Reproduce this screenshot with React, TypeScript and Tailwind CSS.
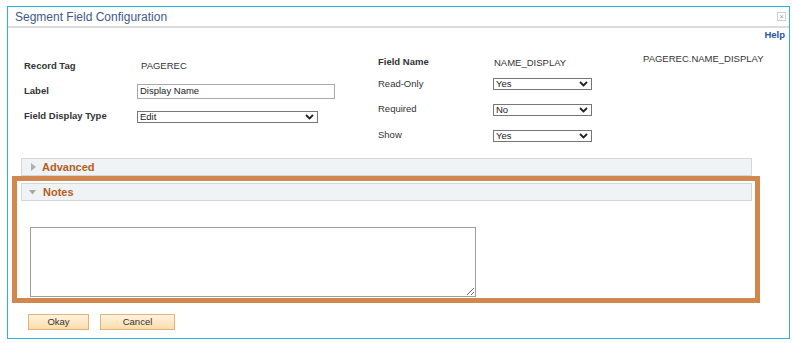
import type { ReactNode } from "react";

const FONT = "font-['Liberation_Sans',Arial,sans-serif]";

function Chevron() {
  return (
    <svg width="9" height="6" viewBox="0 0 9 6" className="shrink-0">
      <path d="M1 1 L4.5 4.5 L8 1" fill="none" stroke="#222" strokeWidth="1.8" />
    </svg>
  );
}

function FakeSelect({ value, width }: { value: string; width: string }) {
  return (
    <div
      className={`flex h-[12px] items-center justify-between border border-[#767676] bg-white pl-[2px] pr-[3px] text-[9.5px] leading-none text-[#222] ${width}`}
    >
      <span>{value}</span>
      <Chevron />
    </div>
  );
}

function Row({ h, label, bold, children }: { h: string; label: string; bold?: boolean; children: ReactNode }) {
  return (
    <div className={`flex items-center ${h}`}>
      <div className={`text-[9.5px] text-[#333] ${bold ? "font-bold" : ""}`}>{label}</div>
      {children}
    </div>
  );
}

function SectionBar({ title, open }: { title: string; open?: boolean }) {
  return (
    <div className="ml-[13px] flex h-[18px] w-[731px] items-center border border-[#d3d7da] bg-[#eff3f5]">
      {open ? (
        <svg width="7" height="5" viewBox="0 0 7 5" className="ml-[7px] mr-[7px]">
          <path d="M0 0 L7 0 L3.5 4.5 Z" fill="#a8a8a8" />
        </svg>
      ) : (
        <svg width="5" height="8" viewBox="0 0 5 8" className="ml-[9px] mr-[6px]">
          <path d="M0 0 L5 4 L0 8 Z" fill="#b0b0b0" />
        </svg>
      )}
      <span className="text-[11px] font-bold leading-none text-[#b45d1c]">{title}</span>
    </div>
  );
}

function PsButton({ label, width }: { label: string; width: string }) {
  return (
    <button
      type="button"
      className={`h-[16px] ${width} border border-[#e2b27c] bg-gradient-to-b from-[#fef3df] to-[#fbdcaa] text-[9.5px] leading-none text-[#333]`}
    >
      {label}
    </button>
  );
}

export default function App() {
  return (
    <div className={`h-[343px] w-[792px] bg-white pl-[7px] pt-[6px] ${FONT}`}>
      <div className="flex h-[333px] w-[783px] flex-col border border-[#27b4e8] bg-white">
        {/* title bar */}
        <div className="flex h-[21px] shrink-0 items-center justify-between border-b-2 border-[#dcdcdc] pl-[7px] pr-[3px]">
          <span className="text-[12px] text-[#40598a]">Segment Field Configuration</span>
          <div className="flex h-[9px] w-[9px] items-center justify-center border border-[#cfcfcf] text-[8px] leading-none text-[#9a9a9a]">
            ×
          </div>
        </div>

        {/* help */}
        <div className="flex h-[14px] items-center justify-end pr-[4px]">
          <span className="text-[9.5px] font-bold text-[#2a5599]">Help</span>
        </div>

        {/* form */}
        <div className="mt-[9px] flex pl-[16px]">
          <div className="w-[354px] pt-[3px]">
            <Row h="h-[25px]" label="Record Tag" bold>
              <div className="ml-auto w-[241px] pl-[4px] text-[9.5px] text-[#333]">PAGEREC</div>
            </Row>
            <Row h="h-[25px]" label="Label" bold>
              <div className="ml-auto mr-[43px] flex h-[15px] w-[198px] items-center border border-[#a9a9a9] pl-[2px] text-[9.5px] text-[#222]">
                Display Name
              </div>
            </Row>
            <Row h="h-[25px]" label="Field Display Type" bold>
              <div className="ml-auto mr-[60px]">
                <FakeSelect value="Edit" width="w-[181px]" />
              </div>
            </Row>
          </div>

          <div className="w-[265px]">
            <Row h="h-[22px]" label="Field Name" bold>
              <div className="ml-auto w-[150px] pl-[1px] pt-[2px] text-[9.5px] text-[#333]">NAME_DISPLAY</div>
            </Row>
            <Row h="h-[22px]" label="Read-Only">
              <div className="ml-auto w-[150px]">
                <FakeSelect value="Yes" width="w-[99px]" />
              </div>
            </Row>
            <Row h="h-[29px]" label="Required">
              <div className="ml-auto w-[150px]">
                <FakeSelect value="No" width="w-[99px]" />
              </div>
            </Row>
            <Row h="h-[23px]" label="Show">
              <div className="ml-auto w-[150px]">
                <FakeSelect value="Yes" width="w-[99px]" />
              </div>
            </Row>
          </div>

          <div className="pt-[1px] text-[9.5px] text-[#333]">PAGEREC.NAME_DISPLAY</div>
        </div>

        {/* advanced */}
        <div className="mt-[11px]">
          <SectionBar title="Advanced" />
        </div>

        {/* notes, highlighted */}
        <div className="relative h-[127px] pt-[7px]">
          <SectionBar title="Notes" open />
          <textarea className="ml-[22px] mt-[26px] block h-[70px] w-[446px] border border-[#9e9e9e] bg-white outline-none" />
          <div className="pointer-events-none absolute left-[4px] top-0 h-[127px] w-[748px] border-[5px] border-[#d2874f]" />
        </div>

        {/* buttons */}
        <div className="mt-[11px] flex gap-[11px] pl-[20px]">
          <PsButton label="Okay" width="w-[61px]" />
          <PsButton label="Cancel" width="w-[75px]" />
        </div>
      </div>
    </div>
  );
}
